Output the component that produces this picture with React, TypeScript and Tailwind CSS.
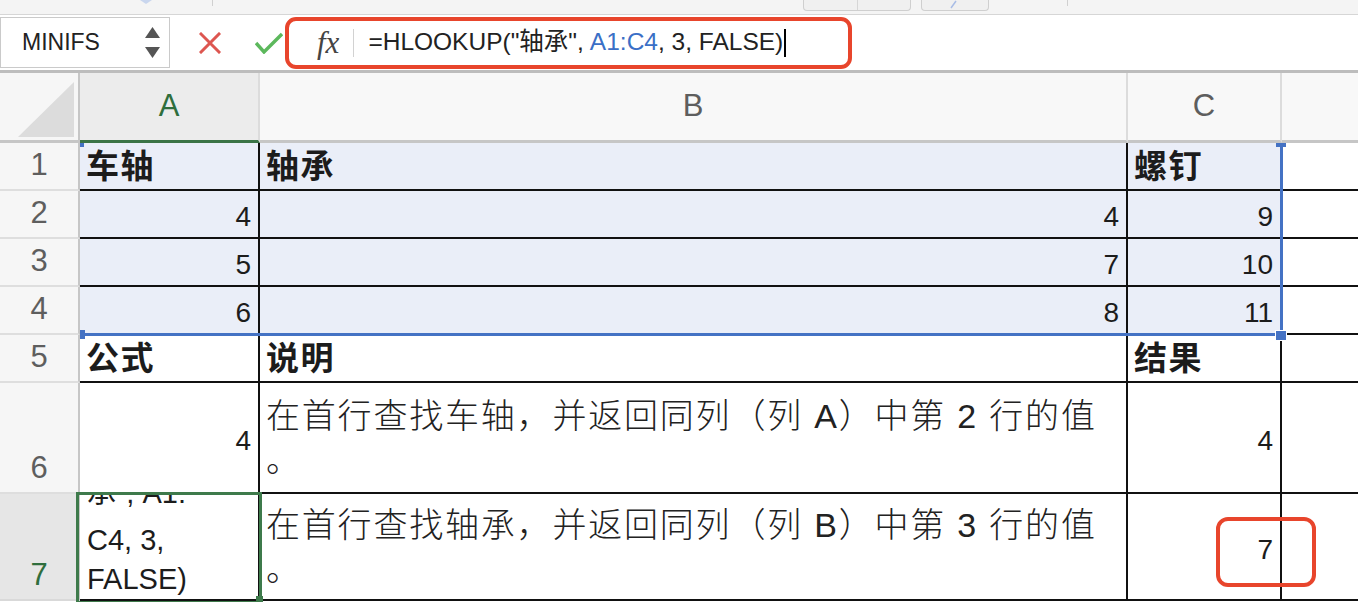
import React from "react";

const SANS = "font-['Liberation_Sans','Noto_Sans_CJK_SC',sans-serif]";

type CellData = {
  text: string;
  kind: "num" | "head" | "desc" | "formula";
};

interface RowData {
  n: number;
  sel?: boolean;
  active?: boolean;
  cells: CellData[];
}

const rows: RowData[] = [
  {
    n: 1,
    sel: true,
    cells: [
      { text: "车轴", kind: "head" },
      { text: "轴承", kind: "head" },
      { text: "螺钉", kind: "head" },
    ],
  },
  {
    n: 2,
    sel: true,
    cells: [
      { text: "4", kind: "num" },
      { text: "4", kind: "num" },
      { text: "9", kind: "num" },
    ],
  },
  {
    n: 3,
    sel: true,
    cells: [
      { text: "5", kind: "num" },
      { text: "7", kind: "num" },
      { text: "10", kind: "num" },
    ],
  },
  {
    n: 4,
    sel: true,
    cells: [
      { text: "6", kind: "num" },
      { text: "8", kind: "num" },
      { text: "11", kind: "num" },
    ],
  },
  {
    n: 5,
    cells: [
      { text: "公式", kind: "head" },
      { text: "说明", kind: "head" },
      { text: "结果", kind: "head" },
    ],
  },
  {
    n: 6,
    cells: [
      { text: "4", kind: "num" },
      { text: "在首行查找车轴，并返回同列（列 A）中第 2 行的值", kind: "desc" },
      { text: "4", kind: "num" },
    ],
  },
  {
    n: 7,
    active: true,
    cells: [
      { text: '=HLOOKUP("轴|承", A1:|C4, 3,|FALSE)', kind: "formula" },
      { text: "在首行查找轴承，并返回同列（列 B）中第 3 行的值", kind: "desc" },
      { text: "7", kind: "num" },
    ],
  },
];

function CellContent({ cell }: { cell: CellData }) {
  if (cell.kind === "num") {
    return (
      <div className="h-full flex items-center justify-end pt-[6px] pr-[7px] text-[28px] leading-none text-[#1c1c1c]">
        {cell.text}
      </div>
    );
  }
  if (cell.kind === "head") {
    return (
      <div className="h-full flex items-center pl-[6px] text-[33px] font-bold tracking-[1.5px] leading-none text-[#1c1c1c]">
        {cell.text}
      </div>
    );
  }
  if (cell.kind === "desc") {
    return (
      <div className="h-full flex items-center pl-[6px] text-[34px] leading-[44px] tracking-[1.8px] text-[#222] font-light">
        <div>
          <div className="whitespace-nowrap">{cell.text}</div>
          <div>。</div>
        </div>
      </div>
    );
  }
  // formula text shown in the active cell while editing, bottom aligned and clipped
  const lines = cell.text.split("|");
  return (
    <div className="h-full flex flex-col justify-end overflow-hidden pl-[7px] text-[29px] leading-[39px] text-[#1c1c1c]">
      {lines.map((line, i) => (
        <div key={i} className={i === 1 ? "whitespace-nowrap mb-[8px]" : "whitespace-nowrap"}>
          {line}
        </div>
      ))}
    </div>
  );
}

function TopStrip() {
  return (
    <div className="h-[15px] bg-[#f4f4f4] border-b border-[#d6d6d6] flex items-start">
      <svg className="ml-[139px]" width="14" height="5" viewBox="0 0 14 5">
        <path d="M1 0 L7 4 L13 0" fill="#c9d6ee" />
      </svg>
      <div className="ml-[59px] w-[1px] h-[6px] bg-[#d0d0d0]" />
      <div className="ml-[590px] w-[108px] h-[11px] flex border border-t-0 border-[#cfcfcf] rounded-b-[4px] bg-[#f0f0f0]">
        <div className="w-[54px] border-r border-[#d6d6d6]" />
      </div>
      <div className="ml-[10px] w-[68px] h-[11px] border border-t-0 border-[#cfcfcf] rounded-b-[4px] bg-[#f0f0f0] flex justify-center">
        <svg width="20" height="10" viewBox="0 0 20 10">
          <path d="M6 8 L11 1" stroke="#a9bde6" strokeWidth="1.5" />
        </svg>
      </div>
      <div className="ml-[78px] w-[1px] h-[6px] bg-[#d0d0d0]" />
    </div>
  );
}

function FormulaBar() {
  return (
    <div className="h-[58px] bg-white border-b-[3px] border-[#bdbdbd] flex items-center">
      <div className="w-[170px] h-[51px] border border-[#cacaca] flex items-center justify-between pl-[21px] pr-[9px]">
        <span className="text-[23px] text-[#222]">MINIFS</span>
        <div className="flex flex-col gap-[9px]">
          <svg width="15" height="11" viewBox="0 0 15 11">
            <path d="M7.5 0 L15 11 L0 11 Z" fill="#555" />
          </svg>
          <svg width="15" height="11" viewBox="0 0 15 11">
            <path d="M0 0 L15 0 L7.5 11 Z" fill="#555" />
          </svg>
        </div>
      </div>
      <svg className="ml-[29px]" width="22" height="22" viewBox="0 0 22 22">
        <path d="M2 2 L20 20 M20 2 L2 20" stroke="#dd5650" strokeWidth="3" strokeLinecap="square" />
      </svg>
      <svg className="ml-[34px]" width="28" height="22" viewBox="0 0 28 22">
        <path d="M1 11 L9 20 L27 2" stroke="#5cb85c" strokeWidth="3.4" fill="none" />
      </svg>
      <div className="ml-[2px] w-[567px] h-[52px] border-4 border-[#e8452c] rounded-[11px] flex items-center">
        <span className="ml-[28px] font-['Liberation_Serif',serif] italic text-[31px] text-[#444] leading-none">
          fx
        </span>
        <div className="ml-[14px] w-[1px] h-[28px] bg-[#d2d2d2]" />
        <div className="ml-[14px] flex items-center text-[24.5px] text-[#222] whitespace-nowrap">
          <span>=HLOOKUP("轴承", </span>
          <span className="ml-[6px] text-[#3a6fc6]">A1:C4</span>
          <span>, 3, FALSE)</span>
          <span className="ml-[1px] w-[2px] h-[28px] bg-black" />
        </div>
      </div>
    </div>
  );
}

export default function App() {
  return (
    <div className={`w-[1358px] h-[602px] overflow-hidden bg-white ${SANS}`}>
      <TopStrip />
      <FormulaBar />

      <div className="relative grid grid-cols-[80px_180px_868px_154px_76px] grid-rows-[70px_48px_48px_48px_48px_48px_111px_107px]">
        {/* corner */}
        <div className="bg-[#f6f6f6] border-r-2 border-b-[3px] border-[#c6c6c6]">
          <svg width="78" height="67" viewBox="0 0 78 67">
            <path d="M18 64 L74 64 L74 9 Z" fill="#dcdcdc" />
          </svg>
        </div>
        <div className="bg-[#ececec] border-r-2 border-[#dcdcdc] border-b-[3px] border-b-[#3b7447] flex items-center justify-center text-[31px] text-[#2f6e3d]">
          A
        </div>
        <div className="bg-[#f8f8f8] border-r-2 border-[#dcdcdc] border-b-[3px] border-b-[#c6c6c6] flex items-center justify-center text-[31px] text-[#5e5e5e]">
          B
        </div>
        <div className="bg-[#f8f8f8] border-r-2 border-[#dcdcdc] border-b-[3px] border-b-[#c6c6c6] flex items-center justify-center text-[31px] text-[#5e5e5e]">
          C
        </div>
        <div className="bg-[#f8f8f8] border-b-[3px] border-[#c6c6c6]" />

        {rows.map((row) => (
          <React.Fragment key={row.n}>
            <div
              className={
                row.active
                  ? "bg-[#e6e6e6] border-r-2 border-r-[#c6c6c6] border-b-2 border-b-[#d9d9d9] flex items-end justify-center pb-[9px] text-[31px] leading-none text-[#2f6e3d]"
                  : "bg-[#f6f6f6] border-r-2 border-r-[#c6c6c6] border-b-2 border-b-[#dedede] flex items-end justify-center pb-[9px] text-[31px] leading-none text-[#5e5e5e]"
              }
            >
              {row.n}
            </div>
            {row.cells.map((cell, i) => (
              <div
                key={i}
                className={
                  row.sel
                    ? "bg-[#eaeef8] border-r-2 border-b-2 border-[#111] overflow-hidden"
                    : "bg-white border-r-2 border-b-2 border-[#111] overflow-hidden"
                }
              >
                <CellContent cell={cell} />
              </div>
            ))}
            <div className="bg-white border-b-2 border-[#111]" />
          </React.Fragment>
        ))}

        {/* reference range A1:C4 */}
        <div className="absolute left-[80px] top-[70px] w-[1203px] h-[193px] border-r-[3px] border-b-[3px] border-[#4472c4] pointer-events-none" />
        <div className="absolute left-[80px] top-[70px] w-[4px] h-[4px] bg-[#4472c4]" />
        <div className="absolute left-[1276px] top-[70px] w-[10px] h-[4px] bg-[#4472c4]" />
        <div className="absolute left-[80px] top-[257px] w-[5px] h-[9px] bg-[#4472c4]" />
        <div className="absolute left-[1275px] top-[257px] w-[12px] h-[11px] bg-[#4472c4] border border-white" />

        {/* active cell A7 */}
        <div className="absolute left-[76px] top-[419px] w-[186px] h-[112px] border-[3px] border-[#3e7a4b] pointer-events-none" />
        <div className="absolute left-[256px] top-[523px] w-[7px] h-[7px] bg-[#3e7a4b]" />

        {/* annotation on C7 */}
        <div className="absolute left-[1216px] top-[444px] w-[100px] h-[70px] border-4 border-[#e8452c] rounded-[12px] pointer-events-none" />
      </div>
    </div>
  );
}
